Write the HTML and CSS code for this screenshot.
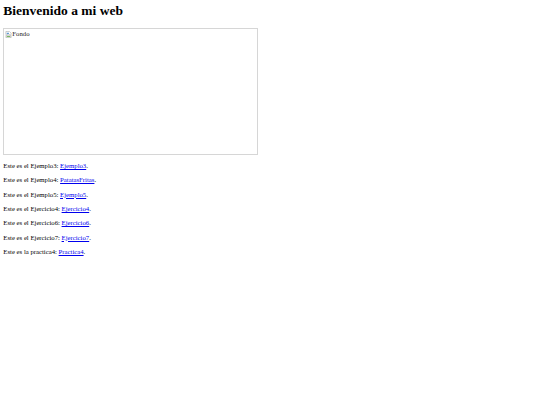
FILE: index.html
```html
<!DOCTYPE html>
<html lang="es">
<head>
<meta charset="utf-8">
<title>Bienvenido a mi web</title>
<link rel="stylesheet" href="styles.css">
</head>
<body>
<h1 class="title">Bienvenido a mi web</h1>
<div class="picture">
  <span class="broken">
    <svg class="broken-icon" viewBox="0 0 16 16" width="7" height="7" aria-hidden="true">
      <path d="M2 1h8l4 4v3l-2 1-2-1-2 1-2-1-2 1-2-1z" fill="#fff" stroke="#8a8a8a" stroke-width="1"/>
      <path d="M2 10l2 1 2-1 2 1 2-1 2 1 2-1v5H2z" fill="#fff" stroke="#8a8a8a" stroke-width="1"/>
      <rect x="4" y="4" width="5" height="3" fill="#5b9bd5"/>
      <rect x="4" y="11.5" width="8" height="2" fill="#6ab04c"/>
    </svg><span class="alt">Fondo</span>
  </span>
</div>
<p class="line">Este es el Ejemplo3: <a href="#">Ejemplo3</a>.</p>
<p class="line">Este es el Ejemplo4: <a href="#">PatatasFritas</a>.</p>
<p class="line">Este es el Ejemplo5: <a href="#">Ejemplo5</a>.</p>
<p class="line">Este es el Ejercicio4: <a href="#">Ejercicio4</a>.</p>
<p class="line">Este es el Ejercicio6: <a href="#">Ejercicio6</a>.</p>
<p class="line">Este es el Ejercicio7: <a href="#">Ejercicio7</a>.</p>
<p class="line">Este es la practica4: <a href="#">Practica4</a>.</p>
</body>
</html>
```
FILE: styles.css
```css
html, body {
  background: #ffffff;
}
body {
  margin: 3.36px;
  font-family: "Liberation Serif", "Times New Roman", serif;
  font-size: 6.72px;
  color: #000000;
}
.title {
  font-size: 13.5px;
  font-weight: bold;
  margin: 0 0 9.6px;
  line-height: 1.15;
}
.picture {
  box-sizing: border-box;
  width: 255px;
  height: 127px;
  margin-bottom: 1.2px;
  border: 1px solid #d6d6d6;
  padding: 1px 0 0 1px;
}
.broken {
  display: flex;
  align-items: flex-start;
  font-size: 6.72px;
  line-height: 1.15;
  color: #222;
}
.broken-icon {
  flex: none;
  margin-top: 0.5px;
}
.line {
  margin: 6.6px 0;
  line-height: 1.15;
}
.line a {
  color: #0000ee;
  text-decoration: underline;
}
```
